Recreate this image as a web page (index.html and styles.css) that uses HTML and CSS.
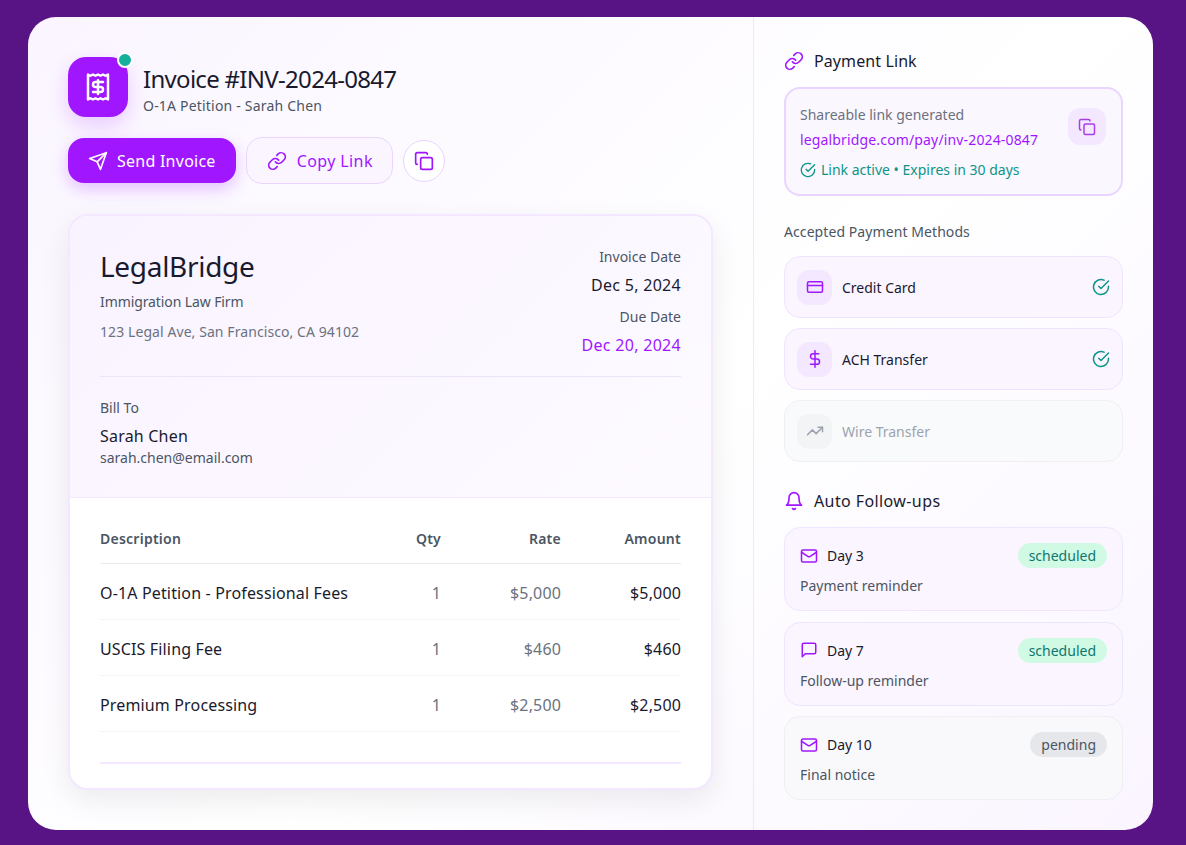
FILE: index.html
```html
<!DOCTYPE html>
<html lang="en">
<head>
    <meta charset="UTF-8">
    <meta name="viewport" content="width=device-width, initial-scale=1.0">
    <title>Invoice #INV-2024-0847</title>
    <link rel="stylesheet" href="styles.css">
</head>
<body>
    <svg class="sprite" xmlns="http://www.w3.org/2000/svg">
        <symbol id="i-receipt" viewBox="0 0 24 24"><path d="M4 2v20l2-1 2 1 2-1 2 1 2-1 2 1 2-1 2 1V2l-2 1-2-1-2 1-2-1-2 1-2-1-2 1Z"/><path d="M16 8h-6a2 2 0 1 0 0 4h4a2 2 0 1 1 0 4H8"/><path d="M12 17.5v-11"/></symbol>
        <symbol id="i-send" viewBox="0 0 24 24"><path d="m22 2-7 20-4-9-9-4Z"/><path d="M22 2 11 13"/></symbol>
        <symbol id="i-link" viewBox="0 0 24 24"><path d="M10 13a5 5 0 0 0 7.54.54l3-3a5 5 0 0 0-7.07-7.07l-1.72 1.71"/><path d="M14 11a5 5 0 0 0-7.54-.54l-3 3a5 5 0 0 0 7.07 7.07l1.71-1.71"/></symbol>
        <symbol id="i-copy" viewBox="0 0 24 24"><rect x="8" y="8" width="14" height="14" rx="2"/><path d="M4 16c-1.1 0-2-.9-2-2V4c0-1.1.9-2 2-2h10c1.1 0 2 .9 2 2"/></symbol>
        <symbol id="i-check" viewBox="0 0 24 24"><path d="M22 11.08V12a10 10 0 1 1-5.93-9.14"/><path d="m9 11 3 3L22 4"/></symbol>
        <symbol id="i-card" viewBox="0 0 24 24"><rect x="2" y="5" width="20" height="14" rx="2"/><path d="M2 10h20"/></symbol>
        <symbol id="i-dollar" viewBox="0 0 24 24"><path d="M12 1v22"/><path d="M17 5H9.5a3.5 3.5 0 0 0 0 7h5a3.5 3.5 0 0 1 0 7H6"/></symbol>
        <symbol id="i-trend" viewBox="0 0 24 24"><path d="m22 7-8.5 8.5-5-5L2 17"/><path d="M16 7h6v6"/></symbol>
        <symbol id="i-bell" viewBox="0 0 24 24"><path d="M6 8a6 6 0 0 1 12 0c0 7 3 9 3 9H3s3-2 3-9"/><path d="M10.3 21a1.94 1.94 0 0 0 3.4 0"/></symbol>
        <symbol id="i-mail" viewBox="0 0 24 24"><rect x="2" y="4" width="20" height="16" rx="2"/><path d="m22 7-8.97 5.7a1.94 1.94 0 0 1-2.06 0L2 7"/></symbol>
        <symbol id="i-message" viewBox="0 0 24 24"><path d="M21 15a2 2 0 0 1-2 2H7l-4 4V5a2 2 0 0 1 2-2h14a2 2 0 0 1 2 2z"/></symbol>
    </svg>

    <div class="shell">
        <main class="left">
            <header class="title-row">
                <div class="logo">
                    <svg class="icon icon-30"><use href="#i-receipt"/></svg>
                    <span class="logo-dot"></span>
                </div>
                <div class="title-text">
                    <h1>Invoice #INV-2024-0847</h1>
                    <p class="subtitle">O-1A Petition - Sarah Chen</p>
                </div>
            </header>

            <div class="actions">
                <button class="btn btn-primary"><svg class="icon icon-20"><use href="#i-send"/></svg>Send Invoice</button>
                <button class="btn btn-outline"><svg class="icon icon-20"><use href="#i-link"/></svg>Copy Link</button>
                <button class="btn-round"><svg class="icon icon-20"><use href="#i-copy"/></svg></button>
            </div>

            <section class="invoice">
                <div class="invoice-head">
                    <div class="firm-row">
                        <div>
                            <h2>LegalBridge</h2>
                            <p class="firm-type">Immigration Law Firm</p>
                            <p class="firm-address">123 Legal Ave, San Francisco, CA 94102</p>
                        </div>
                        <div class="dates">
                            <p class="date-label">Invoice Date</p>
                            <p class="date-value">Dec 5, 2024</p>
                            <p class="date-label">Due Date</p>
                            <p class="date-value date-due">Dec 20, 2024</p>
                        </div>
                    </div>
                    <div class="bill-to">
                        <p class="bill-label">Bill To</p>
                        <p class="bill-name">Sarah Chen</p>
                        <p class="bill-email">sarah.chen@email.com</p>
                    </div>
                </div>
                <div class="invoice-body">
                    <table>
                        <thead>
                            <tr>
                                <th class="col-desc">Description</th>
                                <th>Qty</th>
                                <th>Rate</th>
                                <th>Amount</th>
                            </tr>
                        </thead>
                        <tbody>
                            <tr>
                                <td class="col-desc">O-1A Petition - Professional Fees</td>
                                <td class="muted">1</td>
                                <td class="muted">$5,000</td>
                                <td>$5,000</td>
                            </tr>
                            <tr>
                                <td class="col-desc">USCIS Filing Fee</td>
                                <td class="muted">1</td>
                                <td class="muted">$460</td>
                                <td>$460</td>
                            </tr>
                            <tr>
                                <td class="col-desc">Premium Processing</td>
                                <td class="muted">1</td>
                                <td class="muted">$2,500</td>
                                <td>$2,500</td>
                            </tr>
                        </tbody>
                    </table>
                    <div class="total-rule"></div>
                </div>
            </section>
        </main>

        <aside class="right">
            <h3 class="side-title"><svg class="icon icon-20"><use href="#i-link"/></svg>Payment Link</h3>
            <div class="link-box">
                <div>
                    <p class="link-label">Shareable link generated</p>
                    <p class="link-url">legalbridge.com/pay/inv-2024-0847</p>
                    <p class="link-status"><svg class="icon icon-16"><use href="#i-check"/></svg>Link active • Expires in 30 days</p>
                </div>
                <button class="btn-square"><svg class="icon icon-18"><use href="#i-copy"/></svg></button>
            </div>

            <p class="methods-title">Accepted Payment Methods</p>
            <div class="methods">
                <div class="method">
                    <span class="method-icon"><svg class="icon icon-18"><use href="#i-card"/></svg></span>
                    <span class="method-name">Credit Card</span>
                    <svg class="icon icon-18 method-check"><use href="#i-check"/></svg>
                </div>
                <div class="method">
                    <span class="method-icon"><svg class="icon icon-18"><use href="#i-dollar"/></svg></span>
                    <span class="method-name">ACH Transfer</span>
                    <svg class="icon icon-18 method-check"><use href="#i-check"/></svg>
                </div>
                <div class="method method-off">
                    <span class="method-icon"><svg class="icon icon-18"><use href="#i-trend"/></svg></span>
                    <span class="method-name">Wire Transfer</span>
                </div>
            </div>

            <h3 class="side-title followups-title"><svg class="icon icon-20"><use href="#i-bell"/></svg>Auto Follow-ups</h3>
            <div class="followups">
                <div class="followup">
                    <div class="followup-top">
                        <svg class="icon icon-18"><use href="#i-mail"/></svg>
                        <span class="day">Day 3</span>
                        <span class="pill pill-green">scheduled</span>
                    </div>
                    <p class="followup-text">Payment reminder</p>
                </div>
                <div class="followup">
                    <div class="followup-top">
                        <svg class="icon icon-18"><use href="#i-message"/></svg>
                        <span class="day">Day 7</span>
                        <span class="pill pill-green">scheduled</span>
                    </div>
                    <p class="followup-text">Follow-up reminder</p>
                </div>
                <div class="followup followup-off">
                    <div class="followup-top">
                        <svg class="icon icon-18"><use href="#i-mail"/></svg>
                        <span class="day">Day 10</span>
                        <span class="pill pill-gray">pending</span>
                    </div>
                    <p class="followup-text">Final notice</p>
                </div>
            </div>
        </aside>
    </div>
</body>
</html>
```

FILE: styles.css
```css
* {
    box-sizing: border-box;
}
html, body {
    height: 100%;
}
body {
    margin: 0;
    padding: 17px 33px 15px 28px;
    background: #581385;
    font-family: 'Noto Sans', Inter, sans-serif;
    color: #1a1a2e;
    overflow: hidden;
}
p, h1, h2, h3 {
    margin: 0;
    font-weight: 400;
}
button {
    font-family: inherit;
    cursor: pointer;
}
.sprite {
    display: none;
}
.icon {
    display: block;
    flex: none;
    fill: none;
    stroke: currentColor;
    stroke-width: 2;
    stroke-linecap: round;
    stroke-linejoin: round;
}
.icon-16 { width: 16px; height: 16px; }
.icon-18 { width: 18px; height: 18px; }
.icon-20 { width: 20px; height: 20px; }
.icon-30 { width: 30px; height: 30px; }

.shell {
    display: flex;
    height: 813px;
    border-radius: 28px;
    overflow: hidden;
    background: linear-gradient(135deg, #faf5ff 0%, #ffffff 55%, #faf5ff 100%);
}

/* left column */
.left {
    width: 726px;
    padding: 40px 40px 0;
    border-right: 1px solid #f0e8f8;
}
.title-row {
    display: flex;
    align-items: center;
    gap: 15px;
}
.title-text {
    padding-top: 4px;
}
.logo {
    position: relative;
    width: 60px;
    height: 60px;
    border-radius: 18px;
    background: #a017ff;
    color: #fff;
    display: flex;
    align-items: center;
    justify-content: center;
    box-shadow: 0 8px 20px rgba(160, 23, 255, 0.2);
}
.logo-dot {
    position: absolute;
    top: -5px;
    right: -5px;
    width: 16px;
    height: 16px;
    border-radius: 50%;
    background: #14b09b;
    border: 2px solid #fff;
}
h1 {
    font-size: 24px;
    line-height: 34px;
    letter-spacing: -0.7px;
    color: #1a1a2e;
}
.subtitle {
    font-size: 14px;
    line-height: 20px;
    letter-spacing: 0.2px;
    color: #4b5563;
}
.actions {
    display: flex;
    align-items: center;
    gap: 10px;
    margin-top: 20px;
}
.btn {
    display: flex;
    align-items: center;
    border-radius: 16px;
    font-size: 16px;
}
.btn-primary {
    height: 45px;
    gap: 9px;
    padding: 0 20px;
    border: none;
    background: #a017ff;
    color: #fff;
    letter-spacing: 0.25px;
    box-shadow: 0 6px 16px rgba(160, 23, 255, 0.25);
}
.btn-outline {
    height: 47px;
    gap: 10px;
    padding: 0 19px 0 20px;
    border: 1px solid #e9d5ff;
    background: #faf5ff;
    color: #a017ff;
    letter-spacing: 0.4px;
}
.btn-round {
    width: 42px;
    height: 42px;
    padding: 0;
    border: 1px solid #e9d5ff;
    border-radius: 21px;
    background: #fff;
    color: #a017ff;
    display: flex;
    align-items: center;
    justify-content: center;
}

/* invoice card */
.invoice {
    margin-top: 30px;
    height: 576px;
    border: 2px solid #f3e8ff;
    border-radius: 20px;
    background: #fff;
    overflow: hidden;
    box-shadow: 0 10px 30px rgba(0, 0, 0, 0.08);
}
.invoice-head {
    height: 282px;
    padding: 30px 30px 0;
    background: linear-gradient(135deg, #f9f3ff, #fdfaff);
    border-bottom: 1px solid #f3e8ff;
}
.firm-row {
    display: flex;
    justify-content: space-between;
    height: 131px;
    border-bottom: 1px solid #ede4f7;
}
h2 {
    font-size: 28px;
    line-height: 40px;
    letter-spacing: -0.3px;
    color: #1a1a2e;
}
.firm-type {
    font-size: 14px;
    line-height: 20px;
    margin-top: 6px;
    letter-spacing: -0.1px;
    color: #4b5563;
}
.firm-address {
    font-size: 14px;
    line-height: 20px;
    margin-top: 10px;
    letter-spacing: 0.08px;
    color: #6b7280;
}
.dates {
    padding-top: 1px;
    text-align: right;
}
.date-label {
    font-size: 14px;
    line-height: 20px;
    color: #4b5563;
}
.date-value {
    font-size: 16px;
    line-height: 24px;
    letter-spacing: 0.3px;
    margin: 6px 0 10px;
}
.date-due {
    color: #a017ff;
}
.bill-to {
    padding-top: 21px;
}
.bill-label {
    font-size: 14px;
    line-height: 20px;
    color: #4b5563;
}
.bill-name {
    font-size: 16px;
    line-height: 24px;
    letter-spacing: 0.2px;
    margin-top: 6px;
}
.bill-email {
    font-size: 14px;
    line-height: 20px;
    color: #4b5563;
}
.invoice-body {
    padding: 19px 30px 0;
}
table {
    width: 100%;
    border-collapse: collapse;
}
th, td {
    text-align: right;
    height: 56px;
    padding: 4px 0 0;
    font-size: 16px;
    letter-spacing: 0.15px;
    border-bottom: 1px solid #f3f4f6;
}
th {
    height: 46px;
    padding: 0 0 2px;
    font-size: 14px;
    font-weight: 600;
    letter-spacing: 0.25px;
    color: #4b5563;
    border-bottom-color: #ebe9ee;
}
th:nth-child(2), td:nth-child(2) { width: 80px; }
th:nth-child(3), td:nth-child(3) { width: 120px; }
th:nth-child(4), td:nth-child(4) { width: 120px; }
.col-desc {
    text-align: left;
}
.muted {
    color: #6b7280;
}
.total-rule {
    margin-top: 30px;
    border-top: 2px solid #f3e8ff;
}

/* right column */
.right {
    flex: 1;
    padding: 32px 30px 0;
}
.side-title {
    display: flex;
    align-items: center;
    gap: 10px;
    font-size: 16px;
    line-height: 24px;
    letter-spacing: 0.1px;
}
.side-title .icon {
    color: #a017ff;
}
.link-box {
    display: flex;
    justify-content: space-between;
    margin-top: 14px;
    height: 109px;
    padding: 16px 15px 16px 14px;
    border: 2px solid #e9d5ff;
    border-radius: 16px;
    background: #fbf7ff;
}
.link-label {
    font-size: 14px;
    line-height: 20px;
    color: #6b7280;
}
.link-url {
    font-size: 14px;
    line-height: 20px;
    margin-top: 5px;
    letter-spacing: 0.15px;
    color: #a017ff;
}
.link-status {
    display: flex;
    align-items: center;
    gap: 5px;
    font-size: 14px;
    line-height: 20px;
    margin-top: 10px;
    color: #0d9488;
}
.btn-square {
    width: 38px;
    height: 37px;
    margin-top: 3px;
    padding: 0;
    border: none;
    border-radius: 12px;
    background: #f3e8ff;
    color: #a83de8;
    display: flex;
    align-items: center;
    justify-content: center;
}
.methods-title {
    font-size: 14px;
    line-height: 20px;
    letter-spacing: 0.08px;
    margin-top: 26px;
    color: #4b5563;
}
.methods {
    display: flex;
    flex-direction: column;
    gap: 10px;
    margin-top: 14px;
}
.method {
    display: flex;
    align-items: center;
    gap: 10px;
    height: 62px;
    padding: 0 12px;
    border: 1px solid #f0e5ff;
    border-radius: 16px;
    background: #faf5ff;
}
.method-icon {
    width: 35px;
    height: 35px;
    border-radius: 12px;
    background: #f3e8ff;
    color: #a017ff;
    display: flex;
    align-items: center;
    justify-content: center;
}
.method-name {
    flex: 1;
    font-size: 14px;
}
.method-check {
    color: #0d9488;
}
.method-off {
    background: #f9fafb;
    border-color: #f0f0f3;
}
.method-off .method-icon {
    background: #f3f4f6;
    color: #9ca3af;
}
.method-off .method-name {
    color: #9ca3af;
}
.followups-title {
    margin-top: 27px;
    letter-spacing: 0.4px;
}
.followups {
    display: flex;
    flex-direction: column;
    gap: 10.5px;
    margin-top: 14px;
}
.followup {
    height: 84px;
    padding: 15px 15px 0;
    border: 1px solid #f0e5ff;
    border-radius: 16px;
    background: #faf5ff;
}
.followup-top {
    display: flex;
    align-items: center;
    gap: 9px;
    height: 25px;
    color: #a017ff;
}
.day {
    flex: 1;
    font-size: 14px;
    color: #1a1a2e;
}
.pill {
    font-size: 14px;
    line-height: 25px;
    padding: 0 11px;
    border-radius: 13px;
}
.pill-green {
    background: #d1fae5;
    color: #0f766e;
}
.pill-gray {
    background: #e5e7eb;
    color: #4b5563;
}
.followup-text {
    font-size: 14px;
    line-height: 20px;
    margin-top: 8px;
    color: #4b5563;
}
.followup-off {
    background: #f9f9fb;
    border-color: #efeff2;
}
```
